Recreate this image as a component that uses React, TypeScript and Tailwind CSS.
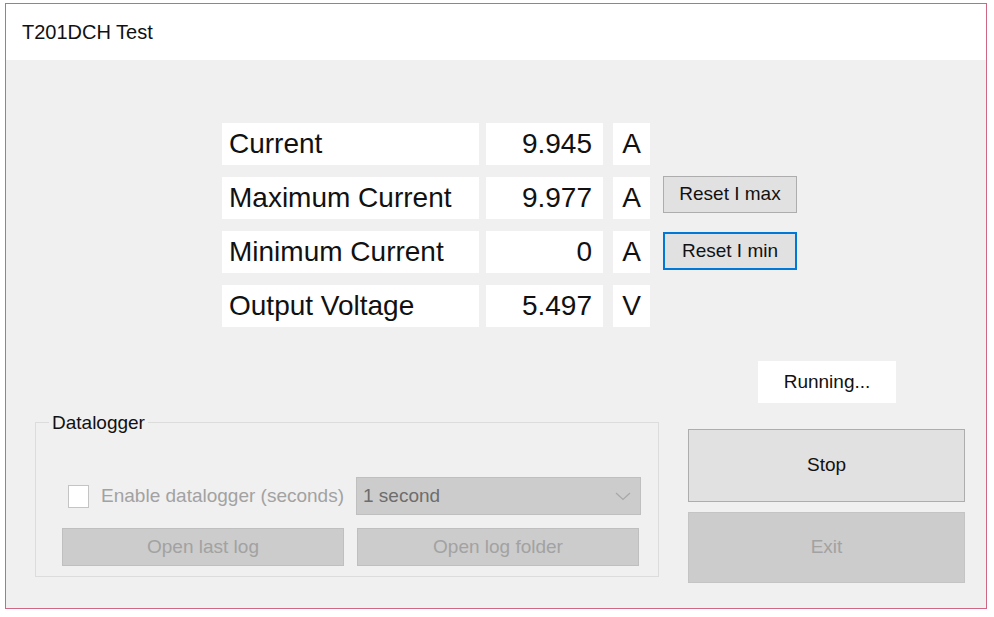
import React from "react";

const font = { fontFamily: '"Liberation Sans", Arial, sans-serif' };

function Row({ label, value, unit, button }: { label: string; value: string; unit: string; button?: React.ReactNode }) {
  return (
    <div className="flex items-start h-[42px]">
      <div className="w-[257px] h-[42px] bg-white flex items-center pl-[7px] text-[28px] text-[#111]">{label}</div>
      <div className="ml-[7px] w-[117px] h-[42px] bg-white flex items-center justify-end pr-[11px] text-[28px] text-[#111]">{value}</div>
      <div className="ml-[10px] w-[37px] h-[42px] bg-white flex items-center justify-center text-[28px] text-[#111]">{unit}</div>
      {button}
    </div>
  );
}

export default function App() {
  return (
    <div className="w-[994px] h-[617px] bg-white pt-[3px] pl-[5px]" style={font}>
      <div className="w-[982px] h-[606px] border border-[#cf6683] flex flex-col">
        <div className="h-[56px] bg-white flex items-center pl-[16px] text-[20px] text-[#111]">T201DCH Test</div>
        <div className="flex-1 bg-[#f0f0f0] flex flex-col">
          <div className="ml-[216px] mt-[63px] flex flex-col gap-[12px]">
            <Row label="Current" value="9.945" unit="A" />
            <Row
              label="Maximum Current"
              value="9.977"
              unit="A"
              button={
                <button className="ml-[13px] -mt-px w-[134px] h-[37px] bg-[#e1e1e1] border border-[#adadad] text-[19px] text-[#111] flex items-center justify-center">
                  Reset I max
                </button>
              }
            />
            <Row
              label="Minimum Current"
              value="0"
              unit="A"
              button={
                <button className="ml-[13px] mt-px w-[134px] h-[38px] bg-[#e1e1e1] border-2 border-[#0078d7] text-[19px] text-[#111] flex items-center justify-center">
                  Reset I min
                </button>
              }
            />
            <Row label="Output Voltage" value="5.497" unit="V" />
          </div>
          <div className="ml-[752px] mt-[34px] w-[138px] h-[42px] bg-white flex items-center justify-center text-[19px] text-[#111]">
            Running...
          </div>
          <div className="mt-[19px] flex items-start">
            <div className="relative ml-[29px] w-[624px] h-[155px] border border-[#dcdcdc] pt-[54px] pl-[26px]">
              <span className="absolute left-[13px] top-[-11px] px-[3px] bg-[#f0f0f0] text-[19px] leading-[22px] text-[#111]">
                Datalogger
              </span>
              <div className="grid grid-cols-[282px_282px] gap-x-[13px] gap-y-[13px]">
                <div className="flex items-center h-[38px] whitespace-nowrap">
                  <div className="ml-[6px] w-[23px] h-[23px] bg-white border border-[#c4c4c4]" />
                  <span className="ml-[12px] text-[19px] text-[#a2a2a2]">Enable datalogger (seconds)</span>
                </div>
                <div className="-ml-px w-[285px] h-[38px] bg-[#cccccc] border border-[#bfbfbf] flex items-center justify-between pl-[6px] pr-[9px]">
                  <span className="text-[19px] text-[#6d6d6d]">1 second</span>
                  <svg width="16" height="9" viewBox="0 0 16 9" fill="none">
                    <path d="M1 1 L8 7.5 L15 1" stroke="#a8a8a8" strokeWidth="1.2" />
                  </svg>
                </div>
                <button className="w-[282px] h-[38px] bg-[#cccccc] border border-[#bfbfbf] text-[19px] text-[#a2a2a2] flex items-center justify-center">
                  Open last log
                </button>
                <button className="w-[282px] h-[38px] bg-[#cccccc] border border-[#bfbfbf] text-[19px] text-[#a2a2a2] flex items-center justify-center">
                  Open log folder
                </button>
              </div>
            </div>
            <div className="ml-[29px] mt-[7px] w-[277px] flex flex-col gap-[10px]">
              <button className="h-[73px] bg-[#e1e1e1] border border-[#adadad] text-[19px] text-[#111] flex items-center justify-center">
                Stop
              </button>
              <button className="h-[71px] bg-[#cccccc] border border-[#c4c4c4] text-[19px] text-[#a2a2a2] flex items-center justify-center">
                Exit
              </button>
            </div>
          </div>
        </div>
      </div>
    </div>
  );
}
